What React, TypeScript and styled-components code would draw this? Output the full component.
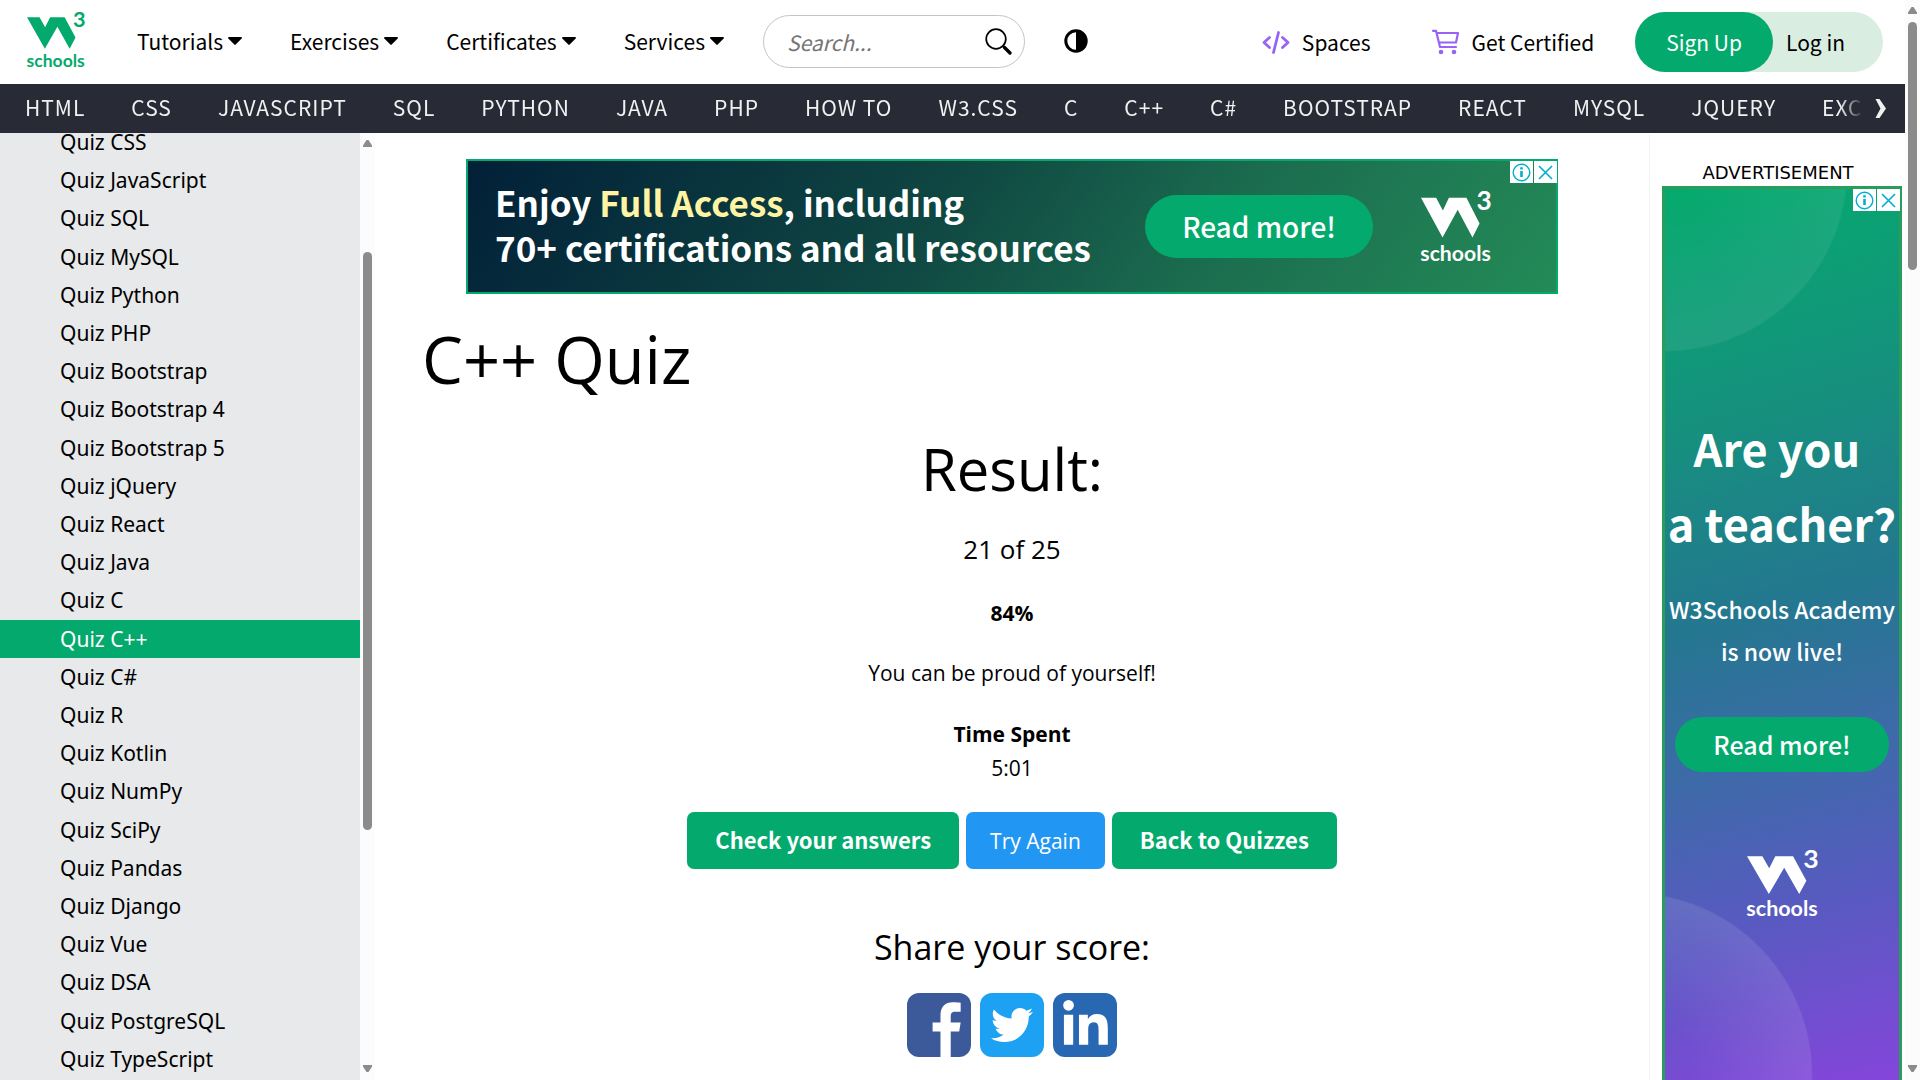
import React from 'react';
import styled, { createGlobalStyle } from 'styled-components';
import { FaLinkedinIn, FaTwitter } from 'react-icons/fa';

const source = `"Noto Sans CJK SC", "Noto Sans", sans-serif`;
const ui = `"Open Sans", "Noto Sans", sans-serif`;
const green = '#04aa6d';

const GlobalStyle = createGlobalStyle`
  *, *::before, *::after { box-sizing: border-box; }
  body { margin: 0; background: #fff; color: #000; font-family: ${ui}; font-size: 21px; }
  a { color: inherit; text-decoration: none; }
  button { border: 0; padding: 0; background: none; color: inherit; font: inherit; cursor: pointer; }
  h1, h2, h3, p, ul { margin: 0; padding: 0; font-weight: 400; }
  ul { list-style: none; }
  svg { display: block; flex: none; overflow: visible; }
`;

const Shell = styled.div`
  display: grid;
  grid-template-columns: minmax(0, 1fr) 15px;
  height: 100vh;
  overflow: hidden;
`;

const Page = styled.div`
  display: grid;
  grid-template-rows: 84px 49px minmax(0, 1fr);
  min-width: 0;
  height: 100vh;
`;

/* ---------- top bar ---------- */

const TopBar = styled.header`
  display: flex;
  align-items: center;
  padding: 0 22px 0 27px;
  font-family: ${source};
  font-size: 21px;
  line-height: 32px;
  white-space: nowrap;
`;

const LogoLink = styled.a`
  color: ${green};
  margin: 0 52px 5px 0;
`;

const MainMenu = styled.nav`
  display: flex;
  gap: 48px;
  margin-right: 39px;
  padding-bottom: 2px;
`;

const MenuButton = styled.button`
  display: flex;
  align-items: center;
  gap: 5px;
`;

const SearchBox = styled.form`
  display: flex;
  align-items: center;
  width: 262px;
  height: 53px;
  margin-bottom: 1px;
  padding: 0 12px 0 23px;
  border: 1px solid #c4c4c4;
  border-radius: 27px;
`;

const SearchInput = styled.input`
  flex: 1;
  min-width: 0;
  border: 0;
  padding: 0;
  outline: 0;
  background: none;
  font: italic 21px ${source};
  &::placeholder { color: #757575; opacity: 1; }
`;

const ThemeButton = styled.button`
  margin: 0 auto 2px 39px;
`;

const TopLinks = styled.div`
  display: flex;
  gap: 61px;
  margin-right: 41px;
`;

const TopLink = styled.a`
  display: flex;
  align-items: center;
  gap: 12px;
`;

const Account = styled.div`
  display: flex;
  height: 60px;
  border-radius: 30px;
  background: #d9eee1;
`;

const SignUp = styled.button`
  padding: 0 31px;
  border-radius: 30px;
  background: ${green};
  color: #fff;
`;

const LogIn = styled.button`
  padding: 0 38px 0 13px;
`;

/* ---------- topics bar ---------- */

const Topics = styled.nav`
  display: flex;
  background: #282a35;
  color: #f1f1f1;
  min-width: 0;
`;

const TopicList = styled.ul`
  display: flex;
  flex: 1;
  min-width: 0;
  gap: 46px;
  padding-left: 25px;
  overflow: hidden;
  font-family: ${source};
  font-size: 21px;
  line-height: 47px;
  letter-spacing: 1px;
  white-space: nowrap;
  mask-image: linear-gradient(to right, #000 calc(100% - 24px), transparent);
`;

const TopicNext = styled.button`
  display: grid;
  place-items: center;
  width: 41px;
  padding-right: 8px;
`;

/* ---------- body ---------- */

const Columns = styled.div`
  display: grid;
  grid-template-columns: 360px 15px minmax(0, 1fr) 256px;
  grid-template-rows: minmax(0, 1fr);
  min-height: 0;
`;

const Sidebar = styled.aside`
  background: #e7e9eb;
  overflow: hidden;
  font-family: "Noto Sans", ${ui};
`;

const QuizList = styled.ul`
  display: grid;
  grid-auto-rows: minmax(38px, 1fr);
  min-height: calc(100% + 8px);
  margin-top: -10px;
`;

const QuizLink = styled.a<{ $active?: boolean }>`
  display: flex;
  align-items: center;
  height: 100%;
  padding-left: 60px;
  background: ${p => (p.$active ? green : 'transparent')};
  color: ${p => (p.$active ? '#fff' : '#000')};
`;

const Track = styled.div`
  display: flex;
  flex-direction: column;
  align-items: center;
  justify-content: space-between;
  padding: 7px 0 8px;
  background: #fcfcfc;
  color: #8b8b8b;
`;

const TrackArea = styled.div<{ $before: number; $after: number }>`
  display: grid;
  flex: 1;
  grid-template-rows: ${p => p.$before}fr auto ${p => p.$after}fr;
`;

const Thumb = styled.div<{ $length: string }>`
  grid-row: 2;
  width: 9px;
  height: ${p => p.$length};
  border-radius: 5px;
  background: #8b8b8b;
`;

const Main = styled.main`
  display: flex;
  flex-direction: column;
  align-items: center;
  padding: 26px 47px 0;
  text-align: center;
`;

const Banner = styled.section`
  position: relative;
  display: flex;
  align-items: center;
  width: 100%;
  max-width: 1092px;
  height: 135px;
  padding: 0 65px 0 27px;
  border: 2px solid ${green};
  background: linear-gradient(125deg, #022038 0%, #0f4642 42%, #1b6c4f 68%, #238b57 100%);
  color: #fff;
  font-family: ${source};
`;

const BannerText = styled.p`
  padding-bottom: 6px;
  font-size: 35px;
  font-weight: 700;
  line-height: 45px;
  text-align: left;
  white-space: nowrap;
`;

const Highlight = styled.span`
  color: #fff4a3;
`;

const AdButton = styled.button<{ $width: number; $height: number; $size: number }>`
  width: ${p => p.$width}px;
  height: ${p => p.$height}px;
  padding-bottom: 2px;
  border-radius: 32px;
  background: ${green};
  color: #fff;
  font-family: ${source};
  font-size: ${p => p.$size}px;
  font-weight: 500;
  line-height: 40px;
`;

const BannerAction = styled.div`
  margin: 0 48px 0 auto;
`;

const AdChoices = styled.div`
  position: absolute;
  top: 0;
  right: -1px;
  display: flex;
  gap: 1px;
`;

const AdChoice = styled.button`
  display: grid;
  place-items: center;
  width: 23px;
  height: 22px;
  background: #fff;
  color: #00aecd;
`;

const Title = styled.h1`
  align-self: stretch;
  margin-top: 25px;
  font-size: 65px;
  line-height: 80px;
  text-align: left;
`;

const Result = styled.h2`
  margin-top: 30px;
  font-size: 58px;
  line-height: 80px;
`;

const Score = styled.p`
  margin: 20px 0 27px;
  font-size: 26px;
  line-height: 40px;
`;

const Line = styled.p<{ $bold?: boolean; $gap?: number }>`
  margin-bottom: ${p => p.$gap ?? 0}px;
  font-weight: ${p => (p.$bold ? 700 : 400)};
  line-height: 34px;
`;

const Actions = styled.div`
  display: flex;
  gap: 7px;
`;

const Action = styled.button<{ $secondary?: boolean }>`
  height: 57px;
  padding: 0 ${p => (p.$secondary ? 24 : 28)}px ${p => (p.$secondary ? 0 : 3)}px;
  border-radius: 7px;
  background: ${p => (p.$secondary ? '#2196f3' : green)};
  color: #fff;
  font-family: ${p => (p.$secondary ? ui : source)};
  font-size: ${p => (p.$secondary ? 21 : 22)}px;
  font-weight: ${p => (p.$secondary ? 400 : 700)};
  white-space: nowrap;
`;

const ShareTitle = styled.h3`
  margin: 53px 0 21px;
  font-size: 34px;
  line-height: 50px;
`;

const ShareRow = styled.div`
  display: flex;
  gap: 9px;
`;

const ShareLink = styled.a<{ $color: string }>`
  display: grid;
  place-items: center;
  width: 64px;
  height: 64px;
  border-radius: 12px;
  background: ${p => p.$color};
  color: #fff;
`;

const AdColumn = styled.aside`
  margin-top: 2px;
  padding: 24px 3px 0 12px;
  border-left: 1px solid #f1f1f1;
  text-align: center;
`;

const AdLabel = styled.p`
  padding-right: 8px;
  font-family: "DejaVu Sans", Verdana, sans-serif;
  font-size: 18px;
  line-height: 27px;
`;

const Tower = styled.section`
  position: relative;
  display: flex;
  flex-direction: column;
  align-items: center;
  height: 900px;
  padding-top: 221px;
  border: 3px solid #2a9d5c;
  background:
    radial-gradient(circle at 0 -20px, rgba(255, 255, 255, 0) 20px, rgba(255, 255, 255, 0.07) 181px, transparent 183px),
    radial-gradient(circle at -35px 886px, rgba(255, 255, 255, 0) 60px, rgba(255, 255, 255, 0.1) 181px, transparent 183px),
    linear-gradient(165deg, #04aa6d 0%, #16907e 26%, #23788f 46%, #3c6ba7 62%, #5a59c2 80%, #8545db 100%);
  color: #fff;
  font-family: ${source};
  white-space: nowrap;
`;

const TowerTitle = styled.h2`
  font-size: 45px;
  font-weight: 700;
  line-height: 75px;
`;

const TowerText = styled.p`
  margin: 28px 0 45px;
  font-size: 23px;
  font-weight: 500;
  line-height: 42px;
`;

const TowerLogo = styled.div`
  margin-top: 78px;
`;

const SchoolsLogo = ({ width, height }: { width: number; height: number }) => (
  <svg width={width} height={height} viewBox="0 0 208 212" preserveAspectRatio="none" fill="currentColor" role="img" aria-label="W3Schools">
    <polygon points="0,20 45,20 65,58 83,20 135,20 174,97 153,139 109,56 64,139" />
    <text x="165" y="58" fontFamily="Lato, sans-serif" fontWeight="700" fontSize="78">3</text>
    <text x="-2" y="208" fontFamily="Lato, sans-serif" fontWeight="700" fontSize="63">schools</text>
  </svg>
);

const Caret = () => (
  <svg width="14" height="8" viewBox="0 0 14 8" fill="currentColor" aria-hidden="true">
    <path d="M1 0h12c.9 0 1.200.9.700 1.500L7.700 7.600c-.4.4-1 .4-1.400 0L.3 1.500C-.2.900.1 0 1 0z" />
  </svg>
);

const Arrow = ({ down }: { down?: boolean }) => (
  <svg width="9" height="7" viewBox="0 0 9 7" fill="currentColor" aria-hidden="true">
    <path d={down ? 'M0 0h9v1.5L5.5 7h-2L0 1.5z' : 'M0 7h9V5.5L5.5 0h-2L0 5.5z'} />
  </svg>
);

const Choices = () => (
  <AdChoices>
    <AdChoice aria-label="Ad information">
      <svg width="19" height="19" viewBox="0 0 19 19" fill="none" stroke="currentColor">
        <circle cx="9.5" cy="9.5" r="8.3" strokeWidth="1.4" />
        <path d="M9.5 8v6M9.5 4.3v2.2" strokeWidth="2.6" />
      </svg>
    </AdChoice>
    <AdChoice aria-label="Close ad">
      <svg width="15" height="15" viewBox="0 0 15 15" fill="none" stroke="currentColor" strokeWidth="1.6">
        <path d="M1 1l13 13M14 1L1 14" />
      </svg>
    </AdChoice>
  </AdChoices>
);

const menus = ['Tutorials', 'Exercises', 'Certificates', 'Services'];

const topics = [
  'HTML', 'CSS', 'JAVASCRIPT', 'SQL', 'PYTHON', 'JAVA', 'PHP', 'HOW TO', 'W3.CSS', 'C',
  'C++', 'C#', 'BOOTSTRAP', 'REACT', 'MYSQL', 'JQUERY', 'EXCEL',
];

const quizzes = [
  'CSS', 'JavaScript', 'SQL', 'MySQL', 'Python', 'PHP', 'Bootstrap', 'Bootstrap 4', 'Bootstrap 5',
  'jQuery', 'React', 'Java', 'C', 'C++', 'C#', 'R', 'Kotlin', 'NumPy', 'SciPy', 'Pandas', 'Django',
  'Vue', 'DSA', 'PostgreSQL', 'TypeScript',
];

export default function App() {
  return (
    <Shell>
      <GlobalStyle />
      <Page>
        <TopBar>
          <LogoLink href="#home"><SchoolsLogo width={58} height={56} /></LogoLink>
          <MainMenu>
            {menus.map(m => (
              <MenuButton key={m}>{m}<Caret /></MenuButton>
            ))}
          </MainMenu>
          <SearchBox role="search">
            <SearchInput type="text" placeholder="Search..." aria-label="Search" />
            <svg width="27" height="27" viewBox="0 0 27 27" fill="none" stroke="#000">
              <circle cx="11" cy="11" r="9.8" strokeWidth="1.7" />
              <path d="M18 18l1.5 1.5" strokeWidth="2" />
              <path d="M19.5 19.5l5.5 5.5" strokeWidth="3.4" strokeLinecap="round" />
            </svg>
          </SearchBox>
          <ThemeButton aria-label="Toggle dark mode">
            <svg width="24" height="24" viewBox="0 0 24 24">
              <circle cx="12" cy="12" r="10.2" fill="#fff" stroke="#000" strokeWidth="3" />
              <path d="M12 1a11 11 0 0 1 0 22z" fill="#000" />
            </svg>
          </ThemeButton>
          <TopLinks>
            <TopLink href="#spaces">
              <svg width="28" height="23" viewBox="0 0 28 23" fill="none" stroke="#9763f6" strokeWidth="2.8" strokeLinecap="round" strokeLinejoin="round">
                <path d="M7.5 6.5L2 11.5l5.500 5M20.500 6.500l5.500 5-5.500 5M16.500 1.500l-5 20" />
              </svg>
              Spaces
            </TopLink>
            <TopLink href="#certified">
              <svg width="28" height="26" viewBox="0 0 28 26" fill="none" stroke="#9763f6" strokeWidth="2.2" strokeLinecap="round" strokeLinejoin="round">
                <path d="M1 1.800h3L8 18h16M4.500 4H26l-2 9.500H7" />
                <circle cx="9" cy="23" r="2.300" fill="#9763f6" stroke="none" />
                <circle cx="22" cy="23" r="2.300" fill="#9763f6" stroke="none" />
              </svg>
              Get Certified
            </TopLink>
          </TopLinks>
          <Account>
            <SignUp>Sign Up</SignUp>
            <LogIn>Log in</LogIn>
          </Account>
        </TopBar>

        <Topics aria-label="Topics">
          <TopicList>
            {topics.map(t => <li key={t}><a href="#topic">{t}</a></li>)}
          </TopicList>
          <TopicNext aria-label="More topics">
            <svg width="11" height="19" viewBox="0 0 11 19" fill="currentColor">
              <path d="M0.500 0h4L11 9.500 4.500 19h-4L5.500 9.500z" />
            </svg>
          </TopicNext>
        </Topics>

        <Columns>
          <Sidebar>
            <QuizList>
              {quizzes.map(q => (
                <li key={q}><QuizLink href="#quiz" $active={q === 'C++'}>Quiz {q}</QuizLink></li>
              ))}
            </QuizList>
          </Sidebar>
          <Track>
            <Arrow />
            <TrackArea $before={105} $after={235}><Thumb $length="578px" /></TrackArea>
            <Arrow down />
          </Track>

          <Main>
            <Banner>
              <BannerText>
                Enjoy <Highlight>Full Access</Highlight>, including<br />
                70+ certifications and all resources
              </BannerText>
              <BannerAction><AdButton $width={228} $height={63} $size={28}>Read more!</AdButton></BannerAction>
              <SchoolsLogo width={70} height={71} />
              <Choices />
            </Banner>

            <Title>C++ Quiz</Title>
            <Result>Result:</Result>
            <Score>21 of 25</Score>
            <Line $bold $gap={26}>84%</Line>
            <Line $gap={27}>You can be proud of yourself!</Line>
            <Line $bold>Time Spent</Line>
            <Line $gap={27}>5:01</Line>
            <Actions>
              <Action>Check your answers</Action>
              <Action $secondary>Try Again</Action>
              <Action>Back to Quizzes</Action>
            </Actions>
            <ShareTitle>Share your score:</ShareTitle>
            <ShareRow>
              <ShareLink href="#facebook" aria-label="Facebook" $color="#3c5a99">
                <svg width="64" height="64" viewBox="0 0 65 65" fill="currentColor">
                  <path d="M34 65V39h-8V30h8v-7.500C34 14 39 9.500 46.500 9.500c3.500 0 6.500.3 8 .5v9h-5.500c-3.800 0-4.600 2-4.600 5V30h10.100L53 39h-8.600v26z" />
                </svg>
              </ShareLink>
              <ShareLink href="#twitter" aria-label="Twitter" $color="#1da1f2"><FaTwitter size={42} /></ShareLink>
              <ShareLink href="#linkedin" aria-label="LinkedIn" $color="#2867b2"><FaLinkedinIn size={51} /></ShareLink>
            </ShareRow>
          </Main>

          <AdColumn>
            <AdLabel>ADVERTISEMENT</AdLabel>
            <Tower>
              <TowerTitle>Are you&nbsp;<br />a teacher?</TowerTitle>
              <TowerText>W3Schools Academy<br />is now live!</TowerText>
              <AdButton $width={214} $height={55} $size={25}>Read more!</AdButton>
              <TowerLogo><SchoolsLogo width={71} height={67} /></TowerLogo>
              <Choices />
            </Tower>
          </AdColumn>
        </Columns>
      </Page>
      <Track>
        <Arrow />
        <TrackArea $before={8} $after={794}><Thumb $length="248px" /></TrackArea>
        <Arrow down />
      </Track>
    </Shell>
  );
}
